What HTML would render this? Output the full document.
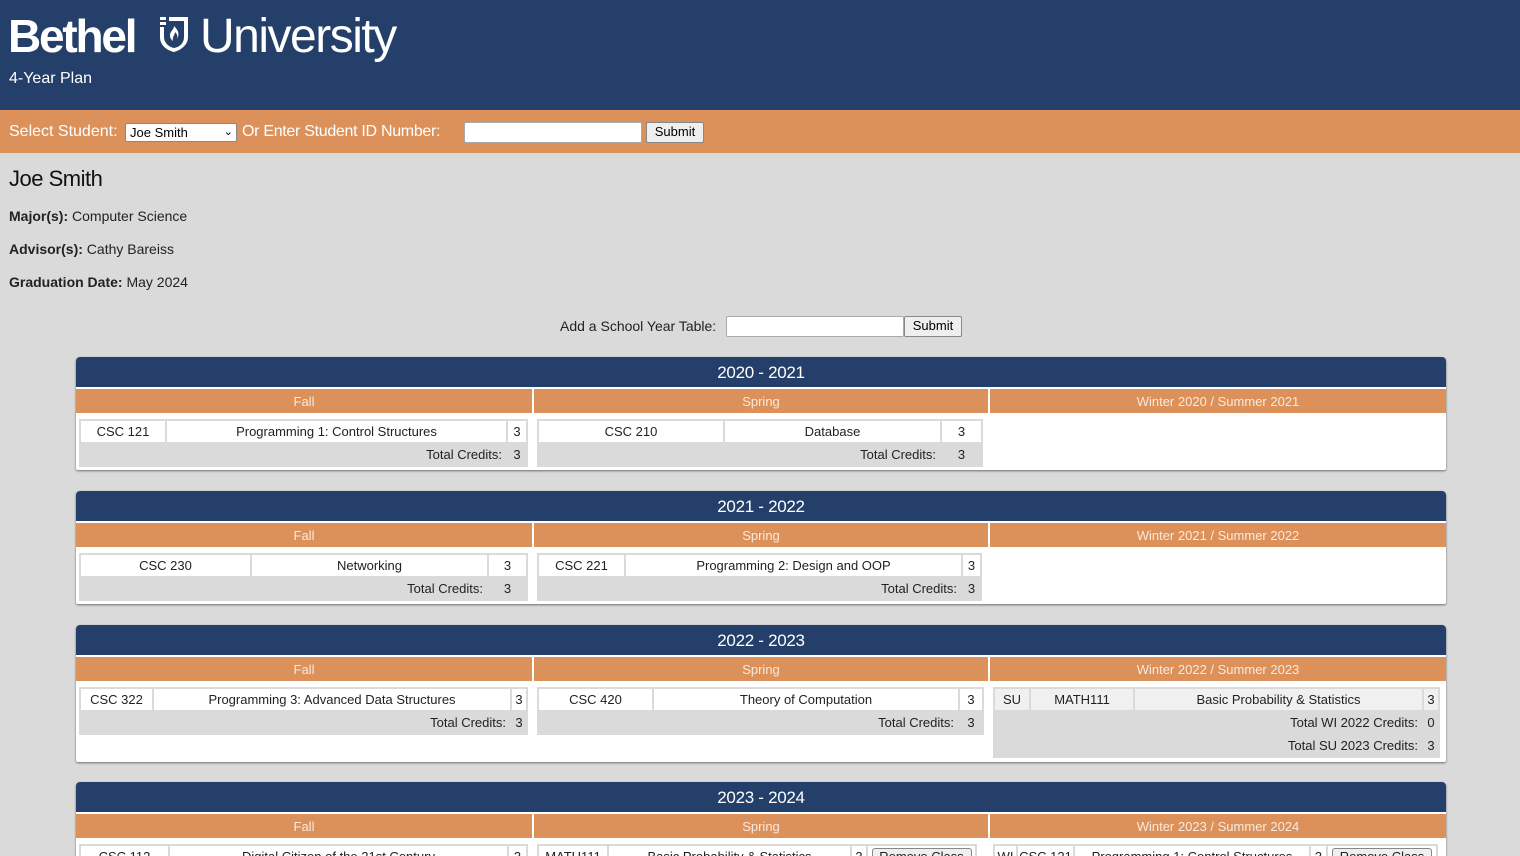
<!DOCTYPE html>
<html style="overflow:hidden"><head><meta charset="utf-8"><style>
*{box-sizing:border-box}
html,body{overflow:hidden}
body{margin:0;width:1520px;height:856px;background:#dadada;font-family:"Liberation Sans",sans-serif;color:#222;position:relative}
.hdr{position:absolute;left:0;top:0;width:1520px;height:110px;background:#243f69;color:#fff}
.bar{position:absolute;left:0;top:110px;width:1520px;height:43px;background:#dc915a;color:#fff;font-size:16px}
.ab{position:absolute}
.inp{position:absolute;background:#fff;border:1px solid #aaa;border-radius:2px}
.btn{position:absolute;background:#efefef;border:1px solid #888;border-radius:2px;font-size:13px;color:#000;text-align:center;line-height:18px}
.card{position:absolute;left:76px;width:1370px;background:#fff;border-radius:4px 4px 2px 2px;box-shadow:0 1px 2px rgba(0,0,0,.5);overflow:hidden}
.yr{height:30px;background:#243f69;color:#fff;text-align:center;font-size:17px;line-height:31px;letter-spacing:-0.3px}
.sems{position:absolute;top:32px;height:24px;left:0;width:1370px}
.sem{position:absolute;top:0;height:24px;background:#dc915a;color:#fbe9dc;font-size:13px;text-align:center;line-height:25px}
table{position:absolute;border-spacing:2px;background:#dadada;table-layout:fixed;font-size:13px}
td{background:#fff;height:21px;padding:0;text-align:center;white-space:nowrap;overflow:hidden}
td.g{background:#dadada;text-align:right;padding-right:4px}
td.gc{background:#dadada}
.w td{background:#f0f0f0}
.w td.g,.w td.gc{background:#dadada}
.rb{display:inline-block;width:100px;height:18px;border:1px solid #888;border-radius:3px;background:#efefef;font-size:13px;line-height:16px}
</style></head><body>
<div class="hdr">
 <div class="ab" style="left:8px;top:7px;font-size:46px;font-weight:bold;letter-spacing:-2.2px;line-height:58px">Bethel</div>
 <svg class="ab" style="left:157px;top:14px" width="34" height="40" viewBox="0 0 34 40"><path d="M3 3h6v3H3zM3 8h6v3H3z M12 3h19v20c0 8-7 13-14 15C9 36 3 31 3 23V13h4v10c0 6 5 10 10 11 6-1 10-5 10-11V7H12z" fill="#fff"/><path d="M17 12c4 4 6 8 3 13 1-3 0-5-2-7 0 3-3 5-2 9-3-2-4-6-2-9 1-2 3-3 3-6z" fill="#fff"/></svg>
 <div class="ab" style="left:200px;top:8px;font-size:48px;font-weight:normal;letter-spacing:-1.5px;line-height:58px">University</div>
 <div class="ab" style="left:9px;top:70px;font-size:16px">4-Year Plan</div>
</div>
<div class="bar">
 <div class="ab" style="left:9px;top:13px">Select Student:</div>
 <div class="inp" style="left:125px;top:13px;width:112px;height:19px;border-color:#888;color:#000;font-size:13px;padding:1px 4px;line-height:16px">Joe Smith<span style="position:absolute;right:3px;top:0;font-size:11px">&#8964;</span></div>
 <div class="ab" style="left:242px;top:13px;letter-spacing:-0.3px">Or Enter Student ID Number:</div>
 <div class="inp" style="left:464px;top:12px;width:178px;height:21px"></div>
 <div class="btn" style="left:646px;top:12px;width:58px;height:21px">Submit</div>
</div>
<div class="ab" style="left:9px;top:166px;font-size:22px;color:#111;letter-spacing:-0.5px">Joe Smith</div>
<div class="ab" style="left:9px;top:208px;font-size:14px"><b>Major(s):</b> Computer Science</div>
<div class="ab" style="left:9px;top:241px;font-size:14px"><b>Advisor(s):</b> Cathy Bareiss</div>
<div class="ab" style="left:9px;top:274px;font-size:14px"><b>Graduation Date:</b> May 2024</div>
<div class="ab" style="left:560px;top:318px;font-size:14px">Add a School Year Table:</div>
<div class="inp" style="left:726px;top:316px;width:178px;height:21px"></div>
<div class="btn" style="left:904px;top:316px;width:58px;height:21px">Submit</div>

<div class="card" style="top:357px;height:113px"><div class="yr">2020 - 2021</div>
<div class="sems"><div class="sem" style="left:0;width:456px">Fall</div><div class="sem" style="left:458px;width:454px">Spring</div><div class="sem" style="left:914px;width:456px">Winter 2020 / Summer 2021</div></div></div>
<table style="left:79px;top:419px;width:449px"><colgroup><col style="width:84px"><col style="width:339px"><col style="width:18px"></colgroup>
<tr><td>CSC 121</td><td>Programming 1: Control Structures</td><td>3</td></tr><tr><td class="g" colspan="2">Total Credits:</td><td class="gc">3</td></tr></table>
<table style="left:537px;top:419px;width:446px"><colgroup><col style="width:184px"><col style="width:215px"><col style="width:39px"></colgroup>
<tr><td>CSC 210</td><td>Database</td><td>3</td></tr><tr><td class="g" colspan="2">Total Credits:</td><td class="gc">3</td></tr></table>

<div class="card" style="top:491px;height:113px"><div class="yr">2021 - 2022</div>
<div class="sems"><div class="sem" style="left:0;width:456px">Fall</div><div class="sem" style="left:458px;width:454px">Spring</div><div class="sem" style="left:914px;width:456px">Winter 2021 / Summer 2022</div></div></div>
<table style="left:79px;top:553px;width:449px"><colgroup><col style="width:169px"><col style="width:235px"><col style="width:37px"></colgroup>
<tr><td>CSC 230</td><td>Networking</td><td>3</td></tr><tr><td class="g" colspan="2">Total Credits:</td><td class="gc">3</td></tr></table>
<table style="left:537px;top:553px;width:445px"><colgroup><col style="width:85px"><col style="width:335px"><col style="width:17px"></colgroup>
<tr><td>CSC 221</td><td>Programming 2: Design and OOP</td><td>3</td></tr><tr><td class="g" colspan="2">Total Credits:</td><td class="gc">3</td></tr></table>

<div class="card" style="top:625px;height:137px"><div class="yr">2022 - 2023</div>
<div class="sems"><div class="sem" style="left:0;width:456px">Fall</div><div class="sem" style="left:458px;width:454px">Spring</div><div class="sem" style="left:914px;width:456px">Winter 2022 / Summer 2023</div></div></div>
<table style="left:79px;top:687px;width:449px"><colgroup><col style="width:71px"><col style="width:356px"><col style="width:14px"></colgroup>
<tr><td>CSC 322</td><td>Programming 3: Advanced Data Structures</td><td>3</td></tr><tr><td class="g" colspan="2">Total Credits:</td><td class="gc">3</td></tr></table>
<table style="left:537px;top:687px;width:447px"><colgroup><col style="width:113px"><col style="width:304px"><col style="width:22px"></colgroup>
<tr><td>CSC 420</td><td>Theory of Computation</td><td>3</td></tr><tr><td class="g" colspan="2">Total Credits:</td><td class="gc">3</td></tr></table>
<table class="w" style="left:993px;top:687px;width:447px"><colgroup><col style="width:34px"><col style="width:102px"><col style="width:287px"><col style="width:14px"></colgroup>
<tr><td>SU</td><td>MATH111</td><td>Basic Probability &amp; Statistics</td><td>3</td></tr>
<tr><td class="g" colspan="3">Total WI 2022 Credits:</td><td class="gc">0</td></tr>
<tr><td class="g" colspan="3">Total SU 2023 Credits:</td><td class="gc">3</td></tr></table>

<div class="card" style="top:782px;height:100px"><div class="yr">2023 - 2024</div>
<div class="sems"><div class="sem" style="left:0;width:456px">Fall</div><div class="sem" style="left:458px;width:454px">Spring</div><div class="sem" style="left:914px;width:456px">Winter 2023 / Summer 2024</div></div></div>
<table style="left:79px;top:844px;width:449px"><colgroup><col style="width:87px"><col style="width:337px"><col style="width:17px"></colgroup>
<tr><td>CSC 112</td><td>Digital Citizen of the 21st Century</td><td>3</td></tr></table>
<table style="left:537px;top:844px;width:440px"><colgroup><col style="width:68px"><col style="width:241px"><col style="width:14px"><col style="width:107px"></colgroup>
<tr><td>MATH111</td><td>Basic Probability &amp; Statistics</td><td>3</td><td><span class="rb">Remove Class</span></td></tr></table>
<table style="left:993px;top:844px;width:445px"><colgroup><col style="width:21px"><col style="width:55px"><col style="width:234px"><col style="width:15px"><col style="width:108px"></colgroup>
<tr><td>WI</td><td>CSC 121</td><td>Programming 1: Control Structures</td><td>3</td><td><span class="rb">Remove Class</span></td></tr></table>
</body></html>
